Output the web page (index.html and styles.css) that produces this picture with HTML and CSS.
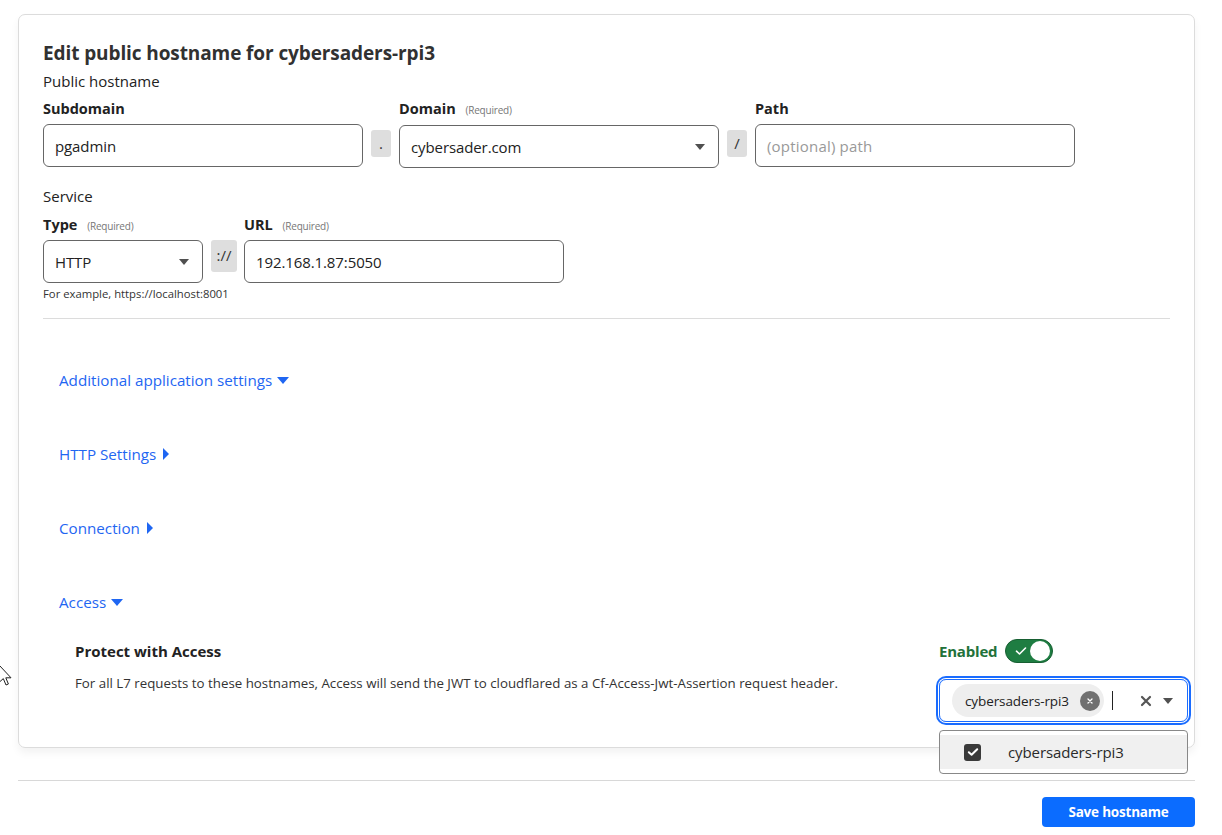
FILE: index.html
```html
<!DOCTYPE html>
<html lang="en">
<head>
<meta charset="utf-8">
<title>Edit public hostname</title>
<link rel="stylesheet" href="styles.css">
</head>
<body>
<div class="page">
  <section class="card">
    <h2 class="title">Edit public hostname for cybersaders-rpi3</h2>
    <div class="group-label first">Public hostname</div>
    <div class="row row-host">
      <div class="field w320">
        <label class="label">Subdomain</label>
        <div class="input"><span class="value">pgadmin</span></div>
      </div>
      <div class="sep">.</div>
      <div class="field w320">
        <label class="label">Domain <span class="req">(Required)</span></label>
        <div class="input select"><span class="value">cybersader.com</span><span class="caret"></span></div>
      </div>
      <div class="sep">/</div>
      <div class="field w320">
        <label class="label">Path</label>
        <div class="input"><span class="placeholder">(optional) path</span></div>
      </div>
    </div>

    <div class="group-label service">Service</div>
    <div class="row row-service">
      <div class="field w160">
        <label class="label">Type <span class="req">(Required)</span></label>
        <div class="input select"><span class="value">HTTP</span><span class="caret"></span></div>
        <div class="hint">For example, https://localhost:8001</div>
      </div>
      <div class="sep sep-proto">://</div>
      <div class="field w320">
        <label class="label">URL <span class="req">(Required)</span></label>
        <div class="input"><span class="value">192.168.1.87:5050</span></div>
      </div>
    </div>

    <hr class="divider">

    <div class="sections">
      <a class="toggle-link">Additional application settings <span class="tri down"></span></a>
      <a class="toggle-link">HTTP Settings <span class="tri right"></span></a>
      <a class="toggle-link">Connection <span class="tri right"></span></a>
      <a class="toggle-link">Access <span class="tri down"></span></a>
    </div>

    <div class="access">
      <div class="access-text">
        <div class="access-title">Protect with Access</div>
        <div class="access-desc">For all L7 requests to these hostnames, Access will send the JWT to cloudflared as a Cf-Access-Jwt-Assertion request header.</div>
      </div>
      <div class="access-controls">
        <div class="enabled-row">
          <span class="enabled">Enabled</span>
          <span class="switch">
            <svg class="switch-check" width="12" height="10" viewBox="0 0 12 10"><path d="M1.5 5.2 L4.5 8 L10.5 2" fill="none" stroke="#fff" stroke-width="1.6" stroke-linecap="round" stroke-linejoin="round"/></svg>
            <span class="knob"></span>
          </span>
        </div>
        <div class="multi">
          <span class="tag">cybersaders-rpi3
            <span class="tag-x"><svg width="8" height="8" viewBox="0 0 8 8"><path d="M2 2 L6 6 M6 2 L2 6" stroke="#fff" stroke-width="1.3" stroke-linecap="round"/></svg></span>
          </span>
          <span class="text-cursor"></span>
          <span class="multi-spacer"></span>
          <svg class="clear-x" width="12" height="12" viewBox="0 0 12 12"><path d="M2 2 L10 10 M10 2 L2 10" stroke="#555" stroke-width="2.2" stroke-linecap="round"/></svg>
          <span class="caret multi-caret"></span>
          <div class="menu">
            <div class="option">
              <span class="checkbox"><svg width="12" height="10" viewBox="0 0 12 10"><path d="M1.8 5.2 L4.6 7.8 L10.2 2.2" fill="none" stroke="#fff" stroke-width="2" stroke-linecap="round" stroke-linejoin="round"/></svg></span>
              <span class="option-text">cybersaders-rpi3</span>
            </div>
          </div>
        </div>
      </div>
    </div>
  </section>

  <hr class="footer-line">
  <div class="footer">
    <button class="btn-primary">Save hostname</button>
  </div>

  <svg class="mouse" width="14" height="24" viewBox="0 0 14 24"><path d="M0.5 0.5 L0.5 17 L4.3 13.6 L7 20 L9.4 19 L6.8 12.8 L12 12.8 Z" fill="#fff" stroke="#222" stroke-width="1" stroke-linejoin="round"/></svg>
</div>
</body>
</html>
```
FILE: styles.css
```css
* { box-sizing: border-box; }
html, body { margin: 0; padding: 0; background: #fff; }
body {
  font-family: "Open Sans", "Noto Sans", "DejaVu Sans", sans-serif;
  color: #313131;
}
.page {
  position: relative;
  width: 1222px;
  height: 835px;
  padding: 14px 27px 0 18px;
  overflow: hidden;
}
.card {
  border: 1px solid #dcdcdc;
  border-radius: 7px;
  box-shadow: 0 5px 9px rgba(0,0,0,0.05);
  padding: 24px 24px 22px 24px;
  height: 734px;
}
.title {
  margin: 0;
  font-size: 19px;
  line-height: 28px;
  font-weight: 700;
  color: #313131;
  letter-spacing: -0.1px;
}
.group-label {
  font-size: 15px;
  line-height: 20px;
  color: #222;
  margin-top: 4px;
}
.group-label.service { margin-top: 18px; }
.row {
  display: flex;
  align-items: flex-start;
  margin-top: 7px;
}
.row-host { margin-top: 8px; }
.row-service { margin-top: 9px; }
.field { display: flex; flex-direction: column; }
.w320 { width: 320px; }
.w160 { width: 160px; }
.label {
  font-size: 14.5px;
  line-height: 20px;
  font-weight: 700;
  color: #222;
  margin-bottom: 5px;
}
.row-service .label { margin-bottom: 4px; }
.req {
  font-size: 10px;
  font-weight: 400;
  color: #777;
  margin-left: 6px;
  letter-spacing: -0.2px;
}
.input {
  height: 43px;
  border: 1px solid #666;
  border-radius: 6px;
  display: flex;
  align-items: center;
  padding: 0 12px 0 11px;
  font-size: 15px;
  color: #222;
}
.value { flex: 1; letter-spacing: -0.1px; }
.placeholder { color: #999; letter-spacing: 0.2px; }
.caret {
  width: 0; height: 0;
  border-left: 5px solid transparent;
  border-right: 5px solid transparent;
  border-top: 6px solid #505050;
  margin-right: 1px;
}
.sep {
  width: 20px;
  height: 27px;
  margin: 31px 8px 0 8px;
  background: #dedede;
  border-radius: 3px;
  font-size: 15px;
  line-height: 27px;
  text-align: center;
  color: #333;
}
.sep-proto {
  width: 26px;
  height: 32px;
  margin: 25px 7px 0 8px;
  line-height: 30px;
  font-size: 15px;
}
.hint {
  font-size: 11.3px;
  line-height: 14px;
  margin-top: 4px;
  color: #333;
  white-space: nowrap;
}
.divider {
  border: 0;
  border-top: 1px solid #dcdcdc;
  margin: 17px 0 0 0;
}
.sections {
  display: flex;
  flex-direction: column;
  align-items: flex-start;
  gap: 54px;
  margin-top: 51px;
  padding-left: 16px;
}
.toggle-link {
  font-size: 15.2px;
  line-height: 20px;
  color: #1f66f2;
  display: flex;
  align-items: center;
  gap: 5px;
}
.tri { width: 0; height: 0; display: inline-block; }
.tri.down {
  border-left: 6px solid transparent;
  border-right: 6px solid transparent;
  border-top: 7px solid #1f66f2;
}
.tri.right {
  border-top: 6px solid transparent;
  border-bottom: 6px solid transparent;
  border-left: 6px solid #1f66f2;
  margin-left: 2px;
}
.access {
  display: flex;
  justify-content: space-between;
  margin-top: 21px;
  padding-left: 32px;
  margin-right: -21px;
}
.access-title {
  font-size: 15px;
  line-height: 20px;
  font-weight: 700;
  color: #222;
  margin-top: 8px;
}
.access-desc {
  font-size: 13.3px;
  line-height: 16px;
  margin-top: 14px;
  color: #333;
}
.access-controls {
  width: 255px;
  display: flex;
  flex-direction: column;
}
.enabled-row {
  display: flex;
  align-items: center;
  gap: 8px;
  padding-left: 3px;
  height: 24px;
  margin-top: 6px;
}
.enabled {
  font-size: 15px;
  font-weight: 700;
  color: #22723a;
  letter-spacing: -0.2px;
}
.switch {
  position: relative;
  width: 48px;
  height: 24px;
  border-radius: 12px;
  background: #1e7d42;
  border: 1px solid #175f32;
  display: inline-block;
}
.switch-check { position: absolute; left: 9px; top: 6px; }
.knob {
  position: absolute;
  right: 2px;
  top: 1px;
  width: 20px;
  height: 20px;
  border-radius: 50%;
  background: #fff;
}
.multi {
  position: relative;
  margin: 16px 3px 0 3px;
  height: 43px;
  border: 1px solid #1a6cff;
  border-radius: 7px;
  box-shadow: 0 0 0 1px #fff, 0 0 0 3px #1a6cff;
  display: flex;
  align-items: center;
  padding: 0 13px 0 12px;
}
.tag {
  display: inline-flex;
  align-items: center;
  height: 33px;
  padding: 0 4px 0 13px;
  background: #eeeeee;
  border-radius: 17px;
  font-size: 13.5px;
  color: #222;
  gap: 11px;
  letter-spacing: -0.1px;
}
.tag-x {
  width: 20px; height: 20px;
  border-radius: 50%;
  background: #707070;
  display: inline-flex;
  align-items: center;
  justify-content: center;
}
.text-cursor {
  width: 1px;
  height: 19px;
  background: #222;
  margin-left: 8px;
}
.multi-spacer { flex: 1; }
.clear-x { margin-right: 11px; }
.multi-caret { border-left-width: 5px; border-right-width: 5px; border-top-width: 6px; }
.menu {
  position: absolute;
  left: -1px;
  right: -1px;
  top: 50px;
  height: 44px;
  border: 1px solid #888;
  border-radius: 4px;
  background: #fff;
  padding: 4px 0;
}
.option {
  height: 34px;
  background: #f0f0f0;
  display: flex;
  align-items: center;
  padding-left: 24px;
}
.checkbox {
  width: 17px; height: 17px;
  border-radius: 3px;
  background: #3a3a3a;
  display: inline-flex;
  align-items: center;
  justify-content: center;
}
.option-text {
  margin-left: 27px;
  font-size: 15px;
  color: #2a2a2a;
  letter-spacing: -0.1px;
}
.footer-line {
  border: 0;
  border-top: 1px solid #d8d8d8;
  margin: 32px 0 0 0;
}
.footer {
  display: flex;
  justify-content: flex-end;
  margin-top: 16px;
}
.btn-primary {
  width: 153px;
  height: 30px;
  border: 0;
  border-radius: 4px;
  background: #0b6cff;
  color: #fff;
  font-family: inherit;
  font-size: 13.5px;
  font-weight: 700;
  letter-spacing: -0.2px;
}
.mouse { position: absolute; left: -1px; top: 665px; }
```
